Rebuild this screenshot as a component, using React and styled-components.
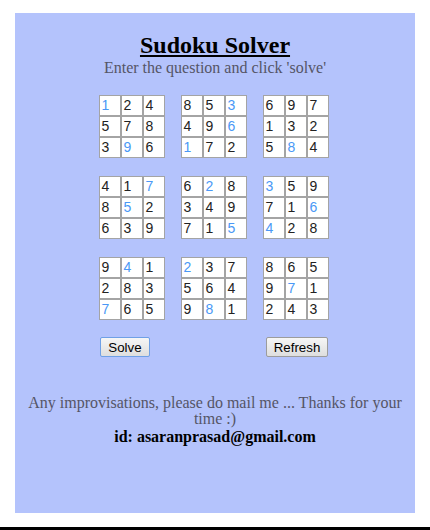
import React from 'react';
import styled, { createGlobalStyle } from 'styled-components';

const GlobalStyle = createGlobalStyle`
    body {
        margin: 0;
        background: #fff;
        font-family: "Liberation Serif", "Times New Roman", serif;
    }
`;

const Page = styled('div')`
    width: 430px;
    height: 530px;
    display: flex;
    flex-direction: column;
`;

const Panel = styled('div')`
    margin: 13px 0 0 15px;
    width: 400px;
    height: 500px;
    background: #b4c3fc;
    display: flex;
    flex-direction: column;
    align-items: center;
    padding-top: 19px;
    box-sizing: border-box;
`;

const Title = styled('h1')`
    margin: 0;
    font-size: 24px;
    line-height: 26px;
    font-weight: bold;
    text-decoration: underline;
    text-underline-offset: 2px;
    text-decoration-thickness: 2px;
    color: #000;
`;

const Subtitle = styled('div')`
    font-size: 16px;
    line-height: 18px;
    color: #555566;
    margin-top: 1px;
`;

const Board = styled('div')`
    margin-top: 18px;
    display: grid;
    grid-template-columns: repeat(3, 66px);
    column-gap: 16px;
    row-gap: 18px;
    padding-left: 1px;
    margin-right: 4px;
`;

const Block = styled('div')`
    display: grid;
    grid-template-columns: repeat(3, 22px);
    grid-auto-rows: 21px;
`;

const Cell = styled('div')`
    box-sizing: border-box;
    border: 1px solid #a4a4a4;
    background: #fff;
    font-family: "Liberation Sans", Arial, sans-serif;
    font-size: 14px;
    line-height: 19px;
    padding-left: 2px;
    color: ${props => props.given ? '#4a98f6' : '#222'};
`;

const ButtonRow = styled('div')`
    width: 230px;
    margin-top: 17px;
    margin-right: 4px;
    display: flex;
    justify-content: space-between;
    padding: 0 0 0 2px;
    box-sizing: border-box;
`;

const Button = styled('button')`
    font-family: "Liberation Sans", Arial, sans-serif;
    font-size: 13.3px;
    height: 20px;
    padding: 0 6px;
    color: #000;
    background: linear-gradient(#f6f6f6, #dedede);
    border: 1px solid ${props => props.focused ? '#6fa0e6' : '#9c9c9c'};
    border-radius: 2px;
    width: ${props => props.w}px;
`;

const Note = styled('div')`
    margin-top: 38px;
    width: 380px;
    text-align: center;
    font-size: 16px;
    line-height: 16px;
    color: #555566;
`;

const Mail = styled('div')`
    font-size: 16px;
    line-height: 19px;
    font-weight: bold;
    color: #000;
`;

const BottomRule = styled('div')`
    margin-top: 14px;
    height: 3px;
    background: #000;
`;

// lowercase b marks a prefilled (blue) digit
const blocks = [
    '1b 2 4 5 7 8 3 9b 6',
    '8 5 3b 4 9 6b 1b 7 2',
    '6 9 7 1 3 2 5 8b 4',
    '4 1 7b 8 5b 2 6 3 9',
    '6 2b 8 3 4 9 7 1 5b',
    '3b 5 9 7 1 6b 4b 2 8',
    '9 4b 1 2 8 3 7b 6 5',
    '2b 3 7 5 6 4 9 8b 1',
    '8 6 5 9 7b 1 2 4 3',
].map(s => s.split(' '));

const App = () => (
    <Page>
        <GlobalStyle />
        <Panel>
            <Title>Sudoku Solver</Title>
            <Subtitle>Enter the question and click 'solve'</Subtitle>
            <Board>
                {blocks.map((cells, i) => (
                    <Block key={i}>
                        {cells.map((c, j) => (
                            <Cell key={j} given={c.endsWith('b')}>{c[0]}</Cell>
                        ))}
                    </Block>
                ))}
            </Board>
            <ButtonRow>
                <Button focused w={50}>Solve</Button>
                <Button w={62}>Refresh</Button>
            </ButtonRow>
            <Note>Any improvisations, please do mail me ... Thanks for your time :)</Note>
            <Mail>id: asaranprasad@gmail.com</Mail>
        </Panel>
        <BottomRule />
    </Page>
);

export default App;
